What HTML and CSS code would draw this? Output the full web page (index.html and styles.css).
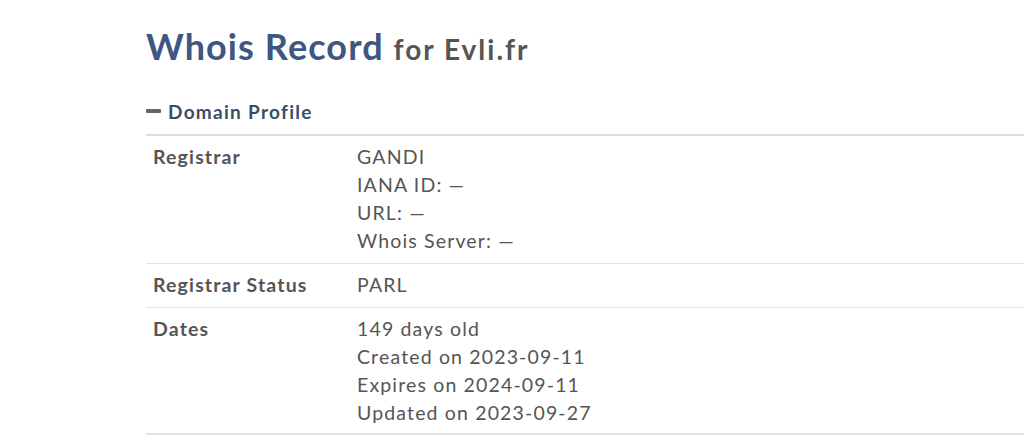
FILE: index.html
```html
<!DOCTYPE html>
<html>
<head>
<meta charset="utf-8">
<link rel="stylesheet" href="styles.css">
</head>
<body>
<div class="page">
  <h1 class="title">Whois Record <small class="sub">for Evli.fr</small></h1>
  <div class="section-head"><span class="minus"></span><span class="section-title">Domain Profile</span></div>
  <div class="table">
    <div class="row">
      <div class="label">Registrar</div>
      <div class="value">GANDI<br>IANA ID: —<br>URL: —<br>Whois Server: —</div>
    </div>
    <div class="row">
      <div class="label">Registrar Status</div>
      <div class="value">PARL</div>
    </div>
    <div class="row last">
      <div class="label">Dates</div>
      <div class="value">149 days old<br>Created on 2023-09-11<br>Expires on 2024-09-11<br>Updated on 2023-09-27</div>
    </div>
  </div>
</div>
</body>
</html>
```
FILE: styles.css
```css
html, body { margin: 0; padding: 0; background: #fff; }
body { font-family: Lato, "Open Sans", sans-serif; overflow: hidden; height: 436px; }
.page { padding: 21px 0 0 146px; }
.title { margin: 0; font-size: 36px; font-weight: 700; color: #3d5682; line-height: 50px; letter-spacing: 1.1px; }
.sub { font-size: 28px; color: #555; font-weight: 700; margin-left: 0; letter-spacing: 2px; }
.section-head { display: flex; align-items: center; margin-top: 25px; height: 24px; }
.minus { width: 15px; height: 4px; border-radius: 1px; background: #666; margin-right: 7px; }
.section-title { font-size: 19px; font-weight: 700; color: #3b4c69; letter-spacing: 1.3px; }
.table { margin-top: 11px; border-top: 2px solid #dedede; }
.row { display: grid; grid-template-columns: 204px 1fr; padding: 7px 7px 8px; border-bottom: 1px solid #e4e4e4; font-size: 19.5px; line-height: 28px; color: #555; letter-spacing: 1.15px; }
.row.last { border-bottom: 2px solid #e4e4e4; padding-bottom: 6px; }
.label { font-weight: 700; }
.value { font-weight: 400; }
```
